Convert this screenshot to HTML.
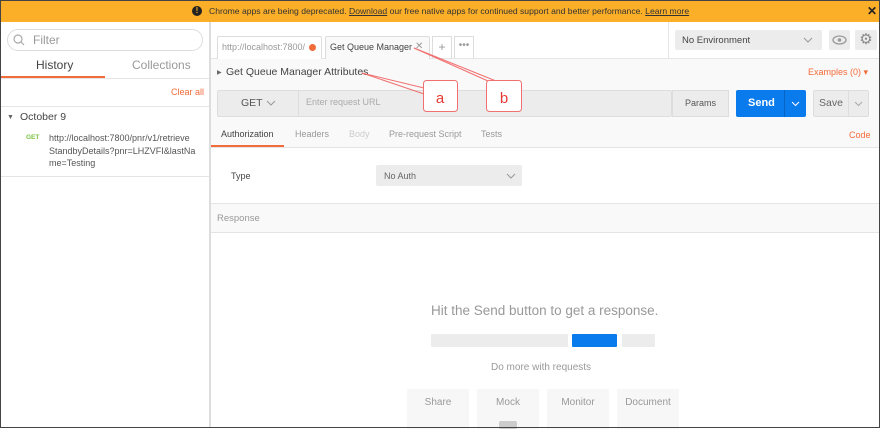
<!DOCTYPE html>
<html><head><meta charset="utf-8"><style>
*{box-sizing:border-box;margin:0;padding:0}
body{width:880px;height:428px;overflow:hidden;font-family:"Liberation Sans",sans-serif;font-size:10px;color:#505050;background:#fff;position:relative}
.a{position:absolute}
.frame{position:absolute;left:0;top:0;width:880px;height:428px;border:1px solid #444;pointer-events:none;z-index:9}
</style></head><body>
<div class="a" style="left:0;top:0;width:880px;height:22px;background:#fbae27"></div>
<div class="a" style="left:192px;top:6px;width:10px;height:10px;border-radius:50%;background:#222;color:#fbae27;font-size:8px;font-weight:bold;text-align:center;line-height:10px">!</div>
<div class="a" style="left:209px;top:6px;font-size:8.6px;color:#333;white-space:nowrap">Chrome apps are being deprecated. <u>Download</u> our free native apps for continued support and better performance. <u>Learn more</u></div>
<div class="a" style="left:867px;top:4px;font-size:12px;color:#222;font-weight:bold">✕</div>

<!-- sidebar -->
<div class="a" style="left:0;top:22px;width:211px;height:406px;background:#fff;border-right:2px solid #ddd"></div>
<div class="a" style="left:7px;top:29px;width:196px;height:22px;border:1px solid #ddd;border-radius:11px"></div>
<svg class="a" style="left:13px;top:34px" width="12" height="12"><circle cx="5" cy="5" r="4" fill="none" stroke="#aaa" stroke-width="1.2"/><line x1="8" y1="8" x2="11" y2="11" stroke="#aaa" stroke-width="1.2"/></svg>
<div class="a" style="left:33px;top:33px;font-size:12px;color:#999">Filter</div>
<div class="a" style="left:36px;top:58px;font-size:12px;color:#444">History</div>
<div class="a" style="left:132px;top:58px;font-size:12px;color:#999">Collections</div>
<div class="a" style="left:0;top:76px;width:105px;height:2px;background:#f26b3a"></div>
<div class="a" style="left:0;top:78px;width:209px;height:1px;background:#e5e5e5"></div>
<div class="a" style="left:171px;top:87px;font-size:9px;color:#f26b3a">Clear all</div>
<div class="a" style="left:0;top:106px;width:209px;height:1px;background:#e5e5e5"></div>
<div class="a" style="left:7px;top:114px;font-size:7px;color:#666">▼</div>
<div class="a" style="left:20px;top:111px;font-size:10.5px;color:#444">October 9</div>
<div class="a" style="left:26px;top:134px;font-size:6.5px;color:#7cc142;font-weight:bold">GET</div>
<div class="a" style="left:49px;top:132px;font-size:9px;color:#555;line-height:12.7px;width:150px">http://localhost:7800/pnr/v1/retrieve<br>StandbyDetails?pnr=LHZVFI&amp;lastNa<br>me=Testing</div>
<div class="a" style="left:0;top:176px;width:209px;height:1px;background:#e5e5e5"></div>

<!-- main top -->
<div class="a" style="left:668px;top:22px;width:1px;height:36px;background:#e5e5e5"></div>
<div class="a" style="left:211px;top:58px;width:669px;height:89px;background:#f9f9f9;border-top:1px solid #e5e5e5"></div>
<div class="a" style="left:217px;top:36px;width:105px;height:23px;border:1px solid #ddd;border-bottom:none;background:#fff;border-radius:2px 2px 0 0"></div>
<div class="a" style="left:222px;top:42px;font-size:9px;color:#999">http://localhost:7800/</div>
<div class="a" style="left:309px;top:44px;width:7px;height:7px;border-radius:50%;background:#f26b3a"></div>
<div class="a" style="left:325px;top:36px;width:105px;height:23px;border:1px solid #ddd;border-bottom:none;background:#f9f9f9;border-radius:2px 2px 0 0"></div>
<div class="a" style="left:330px;top:42px;font-size:9px;color:#444;width:82px;overflow:hidden;white-space:nowrap">Get Queue Manager Attr</div>
<div class="a" style="left:415px;top:41px;font-size:10px;color:#999">✕</div>
<div class="a" style="left:432px;top:36px;width:20px;height:22px;border:1px solid #ddd;border-bottom:none;text-align:center;font-size:12px;color:#999;line-height:20px">+</div>
<div class="a" style="left:454px;top:36px;width:20px;height:22px;border:1px solid #ddd;border-bottom:none;text-align:center;font-size:10px;color:#999;line-height:18px">•••</div>
<div class="a" style="left:675px;top:30px;width:147px;height:20px;background:#ececec;border-radius:2px"></div>
<div class="a" style="left:682px;top:35px;font-size:9.5px;color:#444">No Environment</div>
<svg class="a" style="left:803px;top:37px" width="10" height="6"><path d="M1 1 L5 5 L9 1" fill="none" stroke="#999"/></svg>
<div class="a" style="left:829px;top:30px;width:21px;height:20px;background:#ececec;border-radius:2px"></div>
<svg class="a" style="left:832px;top:35px" width="15" height="10"><ellipse cx="7.5" cy="5" rx="6.5" ry="4" fill="none" stroke="#999" stroke-width="1.3"/><circle cx="7.5" cy="5" r="1.8" fill="#999"/></svg>
<div class="a" style="left:855px;top:30px;width:22px;height:20px;background:#ececec;border-radius:2px;text-align:center;color:#888;font-size:15px;line-height:20px">⚙</div>

<div class="a" style="left:217px;top:69px;font-size:6px;color:#666">▶</div>
<div class="a" style="left:226px;top:66px;font-size:10.5px;color:#444">Get Queue Manager Attributes</div>
<div class="a" style="left:808px;top:67px;font-size:9px;color:#f26b3a">Examples (0) ▾</div>

<div class="a" style="left:217px;top:90px;width:455px;height:27px;background:#ececec;border:1px solid #ddd;border-radius:2px"></div>
<div class="a" style="left:298px;top:90px;width:1px;height:27px;background:#ddd"></div>
<div class="a" style="left:241px;top:97px;font-size:10.5px;color:#555">GET</div>
<svg class="a" style="left:266px;top:100px" width="10" height="6"><path d="M1 1 L5 5 L9 1" fill="none" stroke="#999"/></svg>
<div class="a" style="left:306px;top:97px;font-size:9px;color:#aaa">Enter request URL</div>
<div class="a" style="left:672px;top:90px;width:57px;height:27px;background:#ececec;border:1px solid #ddd;text-align:center;line-height:25px;font-size:9px;color:#555">Params</div>
<div class="a" style="left:736px;top:90px;width:70px;height:27px;background:#097bed;border-radius:2px"></div>
<div class="a" style="left:784px;top:90px;width:1px;height:27px;background:#0664c4"></div>
<div class="a" style="left:748px;top:97px;font-size:11px;color:#fff;font-weight:bold">Send</div>
<svg class="a" style="left:791px;top:101px" width="9" height="6"><path d="M1 1 L4.5 4.5 L8 1" fill="none" stroke="#fff"/></svg>
<div class="a" style="left:813px;top:90px;width:56px;height:27px;background:#ececec;border:1px solid #ddd;border-radius:2px"></div>
<div class="a" style="left:848px;top:90px;width:1px;height:27px;background:#ddd"></div>
<div class="a" style="left:819px;top:97px;font-size:10.5px;color:#666">Save</div>
<svg class="a" style="left:854px;top:101px" width="9" height="6"><path d="M1 1 L4.5 4.5 L8 1" fill="none" stroke="#aaa"/></svg>

<div class="a" style="left:221px;top:129px;font-size:9px;color:#444">Authorization</div>
<div class="a" style="left:295px;top:129px;font-size:9px;color:#999">Headers</div>
<div class="a" style="left:349px;top:129px;font-size:9px;color:#ccc">Body</div>
<div class="a" style="left:389px;top:129px;font-size:9px;color:#999">Pre-request Script</div>
<div class="a" style="left:481px;top:129px;font-size:9px;color:#999">Tests</div>
<div class="a" style="left:849px;top:130px;font-size:9px;color:#f26b3a">Code</div>
<div class="a" style="left:211px;top:145px;width:73px;height:2px;background:#f26b3a"></div>
<div class="a" style="left:211px;top:147px;width:669px;height:1px;background:#e5e5e5"></div>

<div class="a" style="left:231px;top:171px;font-size:9px;color:#444">Type</div>
<div class="a" style="left:376px;top:165px;width:146px;height:21px;background:#ececec;border-radius:2px"></div>
<div class="a" style="left:384px;top:171px;font-size:9px;color:#666">No Auth</div>
<svg class="a" style="left:506px;top:173px" width="10" height="6"><path d="M1 1 L5 5 L9 1" fill="none" stroke="#999"/></svg>

<div class="a" style="left:211px;top:203px;width:669px;height:30px;background:#f9f9f9;border-top:1px solid #e5e5e5;border-bottom:1px solid #e5e5e5"></div>
<div class="a" style="left:217px;top:213px;font-size:9.5px;color:#999">Response</div>

<div class="a" style="left:431px;top:303px;font-size:13.5px;color:#999">Hit the Send button to get a response.</div>
<div class="a" style="left:431px;top:334px;width:137px;height:13px;background:#ececec;border-radius:1px"></div>
<div class="a" style="left:572px;top:334px;width:45px;height:13px;background:#097bed;border-radius:1px"></div>
<div class="a" style="left:622px;top:334px;width:33px;height:13px;background:#ececec;border-radius:1px"></div>
<div class="a" style="left:491px;top:362px;font-size:10px;color:#999">Do more with requests</div>
<div class="a" style="left:407px;top:389px;width:62px;height:40px;background:#f7f7f7;text-align:center;padding-top:8px;font-size:10px;color:#999">Share</div>
<div class="a" style="left:477px;top:389px;width:62px;height:40px;background:#f7f7f7;text-align:center;padding-top:8px;font-size:10px;color:#999">Mock</div>
<div class="a" style="left:547px;top:389px;width:62px;height:40px;background:#f7f7f7;text-align:center;padding-top:8px;font-size:10px;color:#999">Monitor</div>
<div class="a" style="left:617px;top:389px;width:62px;height:40px;background:#f7f7f7;text-align:center;padding-top:8px;font-size:10px;color:#999">Document</div>
<div class="a" style="left:499px;top:421px;width:18px;height:8px;background:#ccc;border-radius:2px"></div>

<svg class="a" style="left:0;top:0;z-index:5" width="880" height="428">
<g fill="none" stroke="#f07070" stroke-width="1">
<line x1="362" y1="73" x2="424" y2="88"/><line x1="362" y1="73" x2="424" y2="94"/>
<line x1="414" y1="48" x2="488" y2="81"/><line x1="414" y1="48" x2="496" y2="81"/>
</g>
<rect x="423.5" y="80.5" width="34" height="31" rx="3" fill="#fff" stroke="#f07070"/>
<rect x="486.5" y="80.5" width="35" height="31" rx="3" fill="#fff" stroke="#f07070"/>
<text x="440" y="103" font-family="Liberation Sans" font-size="15" fill="#e53935" text-anchor="middle">a</text>
<text x="504" y="103" font-family="Liberation Sans" font-size="15" fill="#e53935" text-anchor="middle">b</text>
</svg>
<div class="frame"></div>
</body></html>
